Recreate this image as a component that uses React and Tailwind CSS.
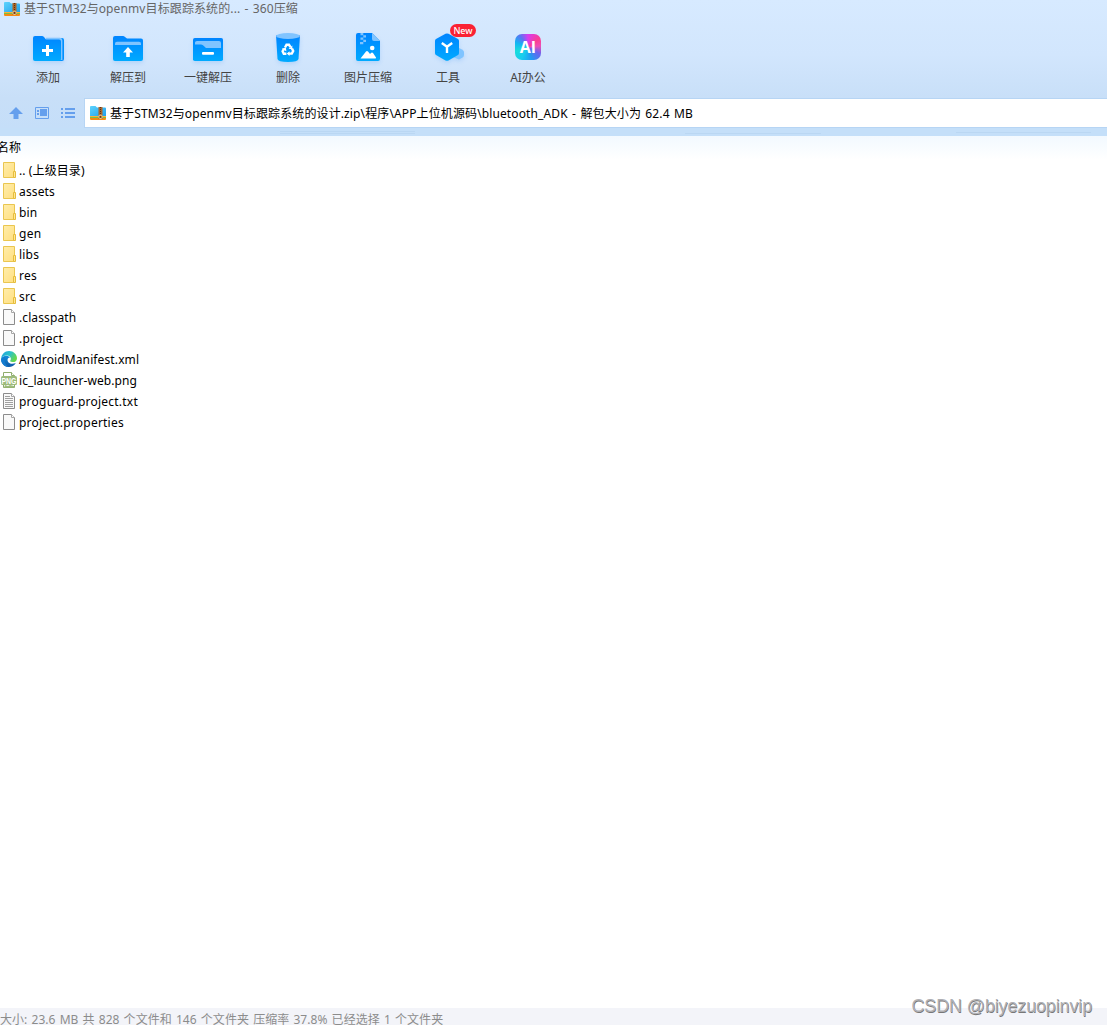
import React from "react";

function ZipIcon({ className }) {
  return (
    <svg className={className} viewBox="0 0 16 14">
      <defs>
        <linearGradient id="zipBlue" x1="0" y1="0" x2="1" y2="1">
          <stop offset="0" stopColor="#5dd3fd" />
          <stop offset="1" stopColor="#1a9bea" />
        </linearGradient>
      </defs>
      <path d="M0 1Q0 0 1 0H5.5L7 1.5H15Q16 1.5 16 2.5V12H0Z" fill="url(#zipBlue)" />
      <path d="M0 10H16V11H0Z" fill="#fbb03b" />
      <path d="M0 11H16V12.5H0Z" fill="#7ac143" />
      <path d="M0 12H16V13Q16 14 15 14H1Q0 14 0 13Z" fill="#f58a12" />
      <rect x="8.5" y="1" width="4" height="12" fill="#a8642a" />
      <path d="M10.5 1V9" stroke="#5a2e14" strokeWidth="1" strokeDasharray="1 1" />
      <rect x="9" y="9.2" width="3" height="3.2" rx=".8" fill="#6c2f12" stroke="#ffe9a6" strokeWidth=".9" />
    </svg>
  );
}

function Blue() {
  return (
    <defs>
      <linearGradient id="blue" x1="0" y1="0" x2="0" y2="1">
        <stop offset="0" stopColor="#0084ff" />
        <stop offset="1" stopColor="#00aaff" />
      </linearGradient>
    </defs>
  );
}

const iconClass = "h-10 w-10 overflow-visible drop-shadow-[0_2px_2px_rgba(70,150,240,0.22)]";

function AddIcon() {
  return (
    <svg className={iconClass} viewBox="0 0 40 40">
      <Blue />
      <path d="M20 10H34Q36 10 36 12V31Q36 33 34 33H20Z" fill="#0090ff" />
      <path d="M18 9.8H32Q34.4 10 34.4 12.5V32H31V12.5H18Z" fill="#80c4ff" />
      <path d="M5 10Q5 8 7 8H14Q15 8 16 9L18 11.4H31Q33 11.4 33 13.4V31Q33 33 31 33H7Q5 33 5 31Z" fill="url(#blue)" />
      <path d="M18 17H21V21H25V24H21V28H18V24H14V21H18Z" fill="#fff" />
    </svg>
  );
}

function ExtractIcon() {
  return (
    <svg className={iconClass} viewBox="0 0 40 40">
      <path d="M5 10Q5 8 7 8H15Q16 8 17 9L19 10.6H33Q35 10.6 35 12.6V31Q35 33 33 33H7Q5 33 5 31Z" fill="url(#blue)" />
      <path d="M7 17V15.5Q7 13.8 9 13.8H31Q33 13.8 33 15.5V17Z" fill="#80c4ff" />
      <path d="M20 19L25 24.5H21.8V29H18.2V24.5H15Z" fill="#fff" />
    </svg>
  );
}

function OneKeyIcon() {
  return (
    <svg className={iconClass} viewBox="0 0 40 40">
      <rect x="5" y="10" width="30" height="23" rx="1.8" fill="url(#blue)" />
      <path d="M7 16.6V14.5Q7 13 9 13H31Q33 13 33 15V20H18L15 17.3Q14 16.6 13 16.6Z" fill="#80c4ff" />
      <rect x="14" y="24" width="12" height="2.8" rx="1" fill="#fff" />
    </svg>
  );
}

function DeleteIcon() {
  return (
    <svg className={iconClass} viewBox="0 0 40 40">
      <path d="M8 7.5H32L30.5 31Q30 34 20 34Q10 34 9.5 31Z" fill="url(#blue)" />
      <ellipse cx="20" cy="8" rx="12" ry="3" fill="#80c4ff" />
      <g fill="none" stroke="#fff" strokeWidth="2.4">
        <path d="M17 19.5L18.5 16.8H21L22.5 19.2" />
        <path d="M24 20.5L25.2 23L23.8 25.6H20.8" />
        <path d="M18.4 25.7H15.8L14.6 23.2L16 20.8" />
      </g>
      <path d="M24.3 17.4V21H20.6ZM21.5 23.2V28L18.8 25.6ZM13.8 20.8L17.8 19.6L18.4 23.2Z" fill="#fff" />
    </svg>
  );
}

function ImageZipIcon() {
  return (
    <svg className={iconClass} viewBox="0 0 40 40">
      <path d="M8 7Q8 5 10 5H24L32 13V31Q32 33 30 33H10Q8 33 8 31Z" fill="url(#blue)" />
      <path d="M24 5L32 13H26Q24 13 24 11Z" fill="#80c4ff" />
      <path d="M12.5 5H15.3V7.2H12.5ZM15.3 7.2H18V9.5H15.3ZM12.5 9.5H15.3V11.8H12.5ZM15.3 11.8H18V14H15.3ZM12 14H15.3V16.3H12Z" fill="#80c4ff" />
      <path d="M12.5 30.5L18 23.5Q19 22.5 20 23.5L22 26L23.3 24.8Q24.2 24 25 25L28 29.5Q28.3 30.5 27.3 30.5Z" fill="#fff" />
      <circle cx="24.2" cy="20" r="2.3" fill="#fff" />
    </svg>
  );
}

function ToolsIcon() {
  return (
    <svg className={iconClass} viewBox="0 0 40 40">
      <path d="M29 19L34 21.5Q36 22.5 36 24V27Q36 28.5 34.5 29.5L31 31.5L25 29Z" fill="#80c4ff" />
      <path d="M17.5 5.8Q19 5 20.5 5.8L30 11Q31 11.6 31 13V25Q31 26.3 30 27L20.5 32.4Q19 33.2 17.5 32.4L8 27Q7 26.3 7 25V13Q7 11.6 8 11Z" fill="url(#blue)" />
      <path d="M13.8 15L19 18.8L24.2 15M19 18.8V25" fill="none" stroke="#fff" strokeWidth="2.4" />
    </svg>
  );
}

function AiIcon() {
  return (
    <div className="flex h-10 w-10 items-center justify-center pb-[2px]">
      <div className="flex h-[26px] w-[26px] items-center justify-center rounded-[7px] bg-[conic-gradient(from_0deg,#d83bf0,#fb3f91_55deg,#ee4fb5_85deg,#6a63ee_120deg,#1f9cf2_165deg,#17cdef_210deg,#18dcdb_250deg,#12b5f3_290deg,#5c73f3_325deg,#d83bf0)] font-['Open_Sans','Noto_Sans',sans-serif] text-[16px] font-bold leading-none text-white">
        AI
      </div>
    </div>
  );
}

const tools = [
  { label: "添加", Icon: AddIcon },
  { label: "解压到", Icon: ExtractIcon },
  { label: "一键解压", Icon: OneKeyIcon },
  { label: "删除", Icon: DeleteIcon },
  { label: "图片压缩", Icon: ImageZipIcon },
  { label: "工具", Icon: ToolsIcon, badge: "New" },
  { label: "AI办公", Icon: AiIcon },
];

function FolderIcon() {
  return (
    <svg className="h-[18px] w-[18px] shrink-0" viewBox="0 0 18 18">
      <defs>
        <linearGradient id="folder" x1="0" y1="0" x2="1" y2="1">
          <stop offset="0" stopColor="#ffedab" />
          <stop offset="1" stopColor="#ffdf80" />
        </linearGradient>
      </defs>
      <path d="M3.5 1.5H14.5V16.5H3.5Z" fill="url(#folder)" stroke="#eac64f" />
      <path d="M13.5 10.5H15.5V16.5H13.5Z" fill="#ffe694" stroke="#e6bd3c" />
    </svg>
  );
}

function FileIcon({ lines }) {
  return (
    <svg className="h-[18px] w-[18px] shrink-0" viewBox="0 0 18 18">
      <path d="M3.5 1.5H11.5L14.5 4.5V16.5H3.5Z" fill="#f9f9f9" stroke="#8c8c8c" />
      <path d="M11.5 1.5V4.5H14.5" fill="#fff" stroke="#a6a6a6" />
      {lines && <path d="M5 4.5H10M5 6.5H13M5 8.5H13M5 10.5H13M5 12.5H13M5 14.5H13" stroke="#a0a0a0" />}
    </svg>
  );
}

function EdgeIcon() {
  return (
    <svg className="h-[18px] w-[18px] shrink-0" viewBox="0 0 18 18">
      <defs>
        <linearGradient id="edgeTop" x1="0" y1="0" x2="1" y2=".5">
          <stop offset="0" stopColor="#1d9fe2" />
          <stop offset=".55" stopColor="#2cc3c6" />
          <stop offset="1" stopColor="#67d84b" />
        </linearGradient>
        <linearGradient id="edgeBody" x1="0" y1="0" x2="0" y2="1">
          <stop offset="0" stopColor="#128fdd" />
          <stop offset="1" stopColor="#1057a5" />
        </linearGradient>
      </defs>
      <path d="M1.2 8.5C3 5 8 4.8 10 7.5C7.6 7.6 7 10 8 11.7C9.6 14.2 13 14.3 15.8 13C13.5 17 8 18.2 4.3 15.4C1.8 13.7.8 11 1.2 8.5Z" fill="url(#edgeBody)" />
      <path d="M5.3 7C3.8 10 4.5 14.6 9 16.9C5 17.3 1 13.7 1.1 9.5C1.4 7.8 3.2 6.6 5.3 7Z" fill="#147cd0" />
      <path d="M1.1 9C1.4 4.3 4.8 1 9 1C13.5 1 17 4.5 17 8.2C17 11 14.8 12.3 12.4 12.1C10.3 11.9 9.6 11.1 10.6 10C11.4 8.8 10.5 6 7.4 5.6C4.5 5.2 2 6.7 1.1 9Z" fill="url(#edgeTop)" />
    </svg>
  );
}

function PngIcon() {
  return (
    <svg className="h-[18px] w-[18px] shrink-0" viewBox="0 0 18 18">
      <path d="M3.5 1.5H11.5L14.5 4.5V16.5H3.5Z" fill="#fff" stroke="#8fad6d" />
      <path d="M11.5 1.5V4.5H14.5" fill="#fff" stroke="#8fad6d" />
      <rect x="1" y="5" width="16" height="9" rx="1.5" fill="#9dbb7c" />
      <path d="M5 14L8 15L10 14L14 15V16.5H4Z" fill="#9dbb7c" />
      <text x="9" y="12.5" textAnchor="middle" fontSize="8.4" fontWeight="700" fill="#fff" fontFamily="Liberation Sans, sans-serif" textLength="15" lengthAdjust="spacingAndGlyphs">PNG</text>
    </svg>
  );
}

const files = [
  [".. (上级目录)", "folder", "tracking-[0.1px]"],
  ["assets", "folder", "tracking-[0.15px]"],
  ["bin", "folder", "tracking-[0.15px]"],
  ["gen", "folder", "tracking-[0.3px]"],
  ["libs", "folder", "tracking-[0.2px]"],
  ["res", "folder", "tracking-[0.3px]"],
  ["src", "folder", "tracking-[0.3px]"],
  [".classpath", "file", "tracking-[0.1px]"],
  [".project", "file", "tracking-[0.2px]"],
  ["AndroidManifest.xml", "edge", "tracking-[0.12px]"],
  ["ic_launcher-web.png", "png", "tracking-[0.07px]"],
  ["proguard-project.txt", "text", "tracking-[0.23px]"],
  ["project.properties", "file", "tracking-[0.22px]"],
];

function RowIcon({ type }) {
  if (type === "folder") return <FolderIcon />;
  if (type === "edge") return <EdgeIcon />;
  if (type === "png") return <PngIcon />;
  return <FileIcon lines={type === "text"} />;
}

export default function App() {
  return (
    <div className="flex h-[1025px] w-[1107px] flex-col overflow-hidden whitespace-pre bg-white font-['Noto_Sans','Noto_Sans_CJK_SC',sans-serif] text-[12px] leading-[18px] text-black">
      <div className="flex h-[136px] shrink-0 flex-col bg-[linear-gradient(180deg,#d7eaff_0%,#d2e6fd_40%,#c8dff8_72%,#c4def9_100%)]">
        <div className="flex h-[18px] items-center pl-1 text-[#666]">
          <ZipIcon className="mr-1 h-[14px] w-4" />
          <span className="tracking-[0.11px] [word-spacing:1px]">基于STM32与openmv目标跟踪系统的... - 360压缩</span>
        </div>
        <div className="flex h-20 pl-2">
          {tools.map(({ label, Icon, badge }) => (
            <div key={label} className="relative flex w-20 flex-col items-center pt-[10px] text-[#444]">
              <Icon />
              <span className="mt-px">{label}</span>
              {badge && (
                <span className="absolute left-[42px] top-[6px] flex h-[13px] w-[26px] items-center justify-center rounded-full bg-[#fa2233] text-[9px] font-medium leading-none text-white">
                  {badge}
                </span>
              )}
            </div>
          ))}
        </div>
        <div className="flex h-[30px]">
          <div className="flex w-[84px] shrink-0 items-center pl-[9px]">
            <svg className="mr-3 h-[14px] w-[14px]" viewBox="0 0 14 14">
              <path d="M7 1L14 8H9.5V13H4.5V8H0Z" fill="#659fed" />
            </svg>
            <svg className="mr-[11px] h-[14px] w-[14px]" viewBox="0 0 14 14">
              <path d="M.5 1.5H13.5V12.5H.5Z" fill="none" stroke="#659fed" />
              <path d="M2 4H4V6H2ZM2 7H4V9H2ZM5 3H12V10H5Z" fill="#659fed" />
            </svg>
            <svg className="h-[14px] w-4" viewBox="0 0 16 14">
              <path d="M1 2H3V4H1ZM1 6H3V8H1ZM1 10H3V12H1ZM5 2H15V4H5ZM5 6H15V8H5ZM5 10H15V12H5Z" fill="#659fed" />
            </svg>
          </div>
          <div className="flex flex-1 items-center border-y border-l border-[#b7d5f4] bg-white pl-[5px]">
            <ZipIcon className="mr-1 h-[14px] w-4" />
            <span className="pt-px tracking-[0.12px] [word-spacing:1.1px]">基于STM32与openmv目标跟踪系统的设计.zip\程序\APP上位机源码\bluetooth_ADK - 解包大小为 62.4 MB</span>
          </div>
        </div>
        <div className="flex h-2 items-center bg-[#c4dff9]">
          <div className="ml-[280px] h-[3px] w-[135px] border-y border-[#bad7f3]" />
          <div className="ml-[270px] mt-[3px] h-px w-[136px] bg-[#bad7f3]" />
          <div className="ml-[135px] h-px w-[135px] bg-[#bad7f3]" />
        </div>
      </div>

      <div className="flex h-6 shrink-0 items-center bg-linear-to-b from-[#f2f9ff] to-white">
        <span className="-ml-[3px]">名称</span>
      </div>
      <div className="flex flex-1 flex-col">
        {files.map(([name, type, tracking]) => (
          <div key={name} className="flex h-[21px] items-center">
            <span className="-mt-px mr-px flex"><RowIcon type={type} /></span>
            <span className={tracking}>{name}</span>
          </div>
        ))}
      </div>

      <div className="relative flex h-[17px] shrink-0 items-end bg-[#f3f4f9] text-[#8c8c8c]">
        <span className="-mb-1 tracking-[0.06px] [word-spacing:0.92px]">大小: 23.6 MB 共 828 个文件和 146 个文件夹 压缩率 37.8% 已经选择 1 个文件夹</span>
        <span className="absolute bottom-[8px] right-[15px] font-['Liberation_Sans',sans-serif] text-[18px] leading-[22px] tracking-[-0.15px] text-[#b0b0b4] [text-shadow:0.5px_0.5px_0.5px_#777]">
          CSDN @biyezuopinvip
        </span>
      </div>
    </div>
  );
}
